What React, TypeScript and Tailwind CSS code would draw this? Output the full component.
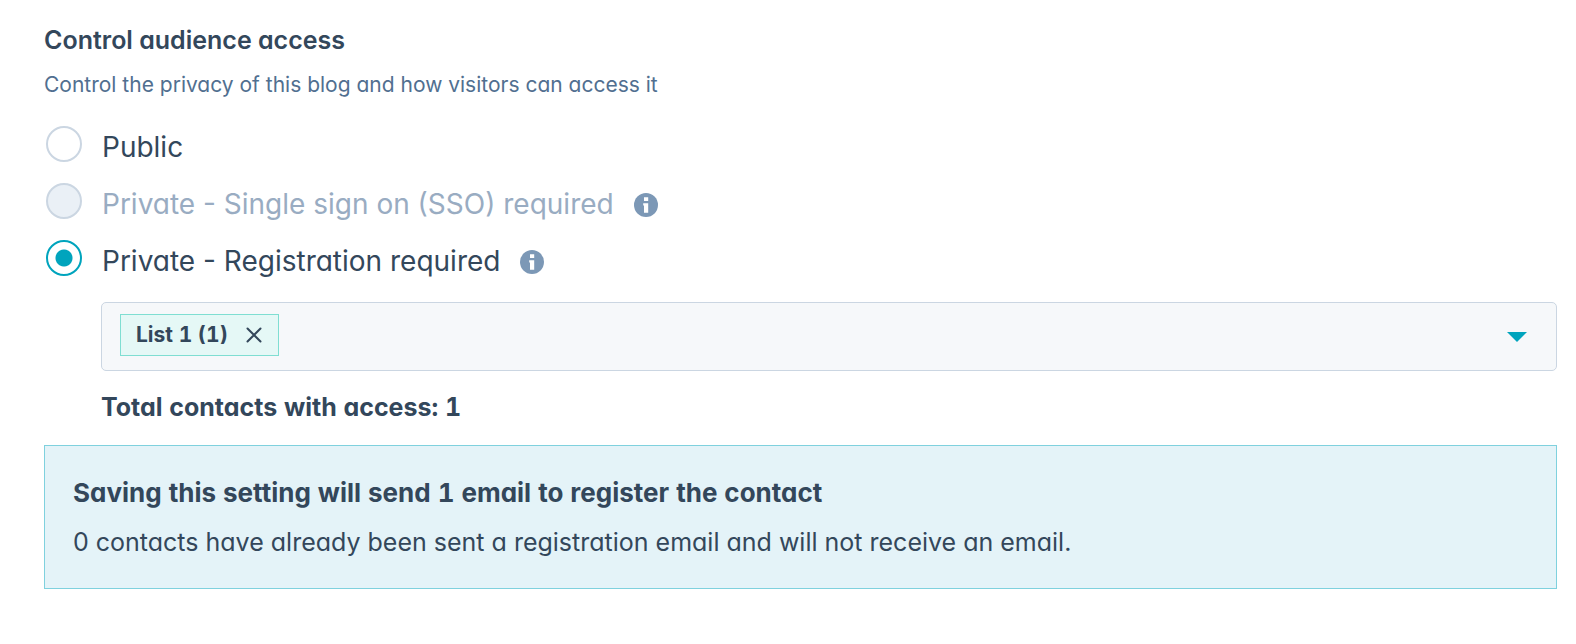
import { useState } from "react";

type AccessOption = {
  value: string;
  label: string;
  disabled?: boolean;
  help?: string;
};

const OPTIONS: AccessOption[] = [
  { value: "public", label: "Public" },
  {
    value: "sso",
    label: "Private - Single sign on (SSO) required",
    disabled: true,
    help: "About single sign on",
  },
  {
    value: "registration",
    label: "Private - Registration required",
    help: "About registration",
  },
];

function InfoIcon() {
  return (
    <svg viewBox="0 0 24 24" className="size-6" aria-hidden="true">
      <circle cx="12" cy="12" r="12" fill="#7c98b6" />
      <path d="M10 4.2h4.2v3.9H10zM9.2 10.3h5v9.5H10v-7.2h-.8z" fill="#fff" />
    </svg>
  );
}

function AccessRadio({
  option,
  checked,
  onSelect,
}: {
  option: AccessOption;
  checked: boolean;
  onSelect: () => void;
}) {
  const id = `access-${option.value}`;
  return (
    <div className="flex h-9 items-center">
      <input
        id={id}
        type="radio"
        name="audience-access"
        value={option.value}
        checked={checked}
        disabled={option.disabled}
        onChange={onSelect}
        className="ml-0.5 size-9 shrink-0 appearance-none rounded-full border-2 border-[#cbd6e2] bg-white checked:border-[#00a4bd] checked:bg-[radial-gradient(circle,#00a4bd_8px,#ffffff_9px)] disabled:bg-[#eaf0f6]"
      />
      <label
        htmlFor={id}
        className={
          option.disabled
            ? "pt-1.5 pl-5 text-[28px] leading-9 text-[#99acc2]"
            : "pt-1.5 pl-5 text-[28px] leading-9"
        }
      >
        {option.label}
      </label>
      {option.help && (
        <button type="button" aria-label={option.help} className="mt-2 ml-5">
          <InfoIcon />
        </button>
      )}
    </div>
  );
}

export default function App() {
  const [access, setAccess] = useState("registration");
  const [lists, setLists] = useState(["List 1 (1)"]);

  return (
    <main className="bg-white pt-6 pr-[19px] pb-12 pl-11 font-['Inter',sans-serif] text-[#33475b] [font-feature-settings:'cv11']">
      <fieldset>
        <legend className="text-[25px] leading-8 font-semibold">
          Control audience access
        </legend>
        <p className="mt-[13px] text-[21px] leading-8 text-[#516f90]">
          Control the privacy of this blog and how visitors can access it
        </p>
        <div className="mt-[25px] flex flex-col gap-[21px]">
          {OPTIONS.map((option) => (
            <AccessRadio
              key={option.value}
              option={option}
              checked={access === option.value}
              onSelect={() => setAccess(option.value)}
            />
          ))}
        </div>
      </fieldset>

      <div className="mt-[26px] ml-[57px] flex h-[69px] items-center rounded-[5px] border border-[#cbd6e2] bg-[#f6f8fa] pr-[29px] pl-[18px]">
        <div className="flex flex-1 gap-2">
          {lists.map((list) => (
            <span
              key={list}
              className="mb-1 flex h-[42px] items-center gap-[18px] border border-[#7fded2] bg-[#e5f8f6] pr-4 pl-[15px] text-[21px] font-bold tabular-nums"
            >
              {list}
              <button
                type="button"
                aria-label={`Remove ${list}`}
                onClick={() => setLists(lists.filter((l) => l !== list))}
              >
                <svg viewBox="0 0 16 16" className="size-4" aria-hidden="true">
                  <path
                    d="M1.5 1.5l13 13M14.5 1.5l-13 13"
                    stroke="#33475b"
                    strokeWidth="2"
                    strokeLinecap="round"
                    fill="none"
                  />
                </svg>
              </button>
            </span>
          ))}
        </div>
        <button type="button" aria-label="Choose lists">
          <svg viewBox="0 0 20 10" className="h-[10px] w-5" aria-hidden="true">
            <path d="M0 0h20L10 10z" fill="#00a4bd" />
          </svg>
        </button>
      </div>
      <p className="mt-5 ml-[57px] text-[25px] leading-8 font-bold tabular-nums">
        Total contacts with access: 1
      </p>

      <section className="mt-[22px] border border-[#7fd1de] bg-[#e4f3f8] px-7 pt-[31px] pb-[30px]">
        <h2 className="text-[26px] leading-8 font-bold tabular-nums">
          Saving this setting will send 1 email to register the contact
        </h2>
        <p className="mt-[17px] text-[25px] leading-8">
          0 contacts have already been sent a registration email and will not
          receive an email.
        </p>
      </section>
    </main>
  );
}
